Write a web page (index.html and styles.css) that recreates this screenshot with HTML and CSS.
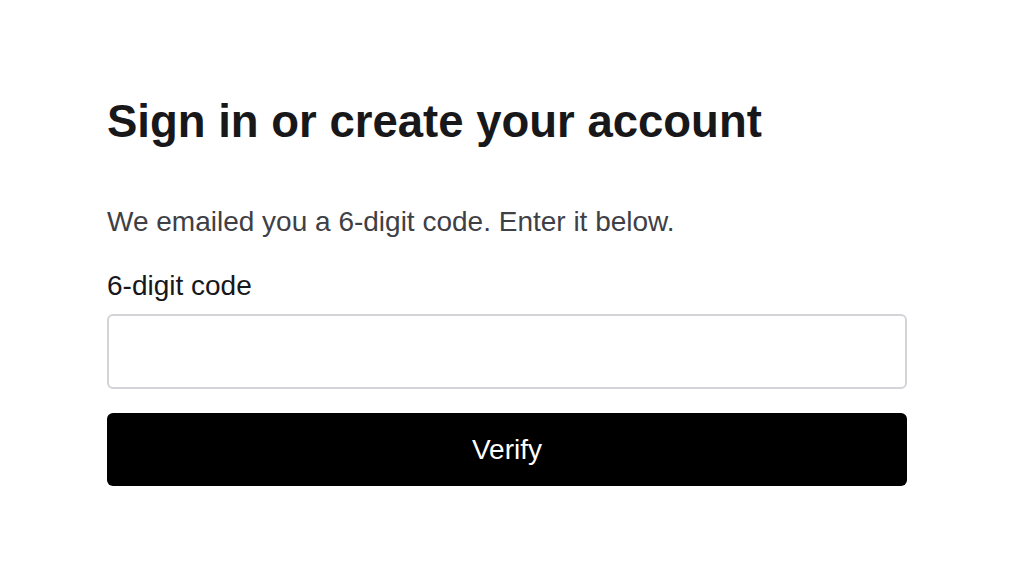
FILE: index.html
```html
<!DOCTYPE html>
<html lang="en">
<head>
<meta charset="utf-8">
<title>Sign in</title>
<link rel="stylesheet" href="styles.css">
</head>
<body>
<main class="page">
  <h1 class="title">Sign in or create your account</h1>
  <p class="lead">We emailed you a 6-digit code. Enter it below.</p>
  <form class="form">
    <label class="label" for="code">6-digit code</label>
    <input class="input" id="code" type="text" inputmode="numeric" autocomplete="one-time-code">
    <button class="button" type="button">Verify</button>
  </form>
</main>
</body>
</html>
```

FILE: styles.css
```css
html, body {
  margin: 0;
  padding: 0;
  background: #ffffff;
}

body {
  font-family: "Liberation Sans", Arial, sans-serif;
  color: #18181b;
}

.page {
  width: 800px;
  padding: 94px 0 0 107px;
  display: flex;
  flex-direction: column;
}

.title {
  margin: 0;
  font-size: 45.5px;
  line-height: 55px;
  font-weight: 700;
  color: #18181b;
}

.lead {
  margin: 52px 0 0;
  font-size: 28px;
  line-height: 42px;
  color: #3f3f46;
}

.form {
  margin-top: 22px;
  display: flex;
  flex-direction: column;
}

.label {
  font-size: 28px;
  line-height: 42px;
  color: #18181b;
}

.input {
  margin-top: 7px;
  box-sizing: border-box;
  width: 800px;
  height: 75px;
  border: 2px solid #d4d4d8;
  border-radius: 6px;
  background: #ffffff;
  padding: 0 20px;
  font: inherit;
  font-size: 28px;
  outline: none;
}

.button {
  margin-top: 24px;
  box-sizing: border-box;
  width: 800px;
  height: 73px;
  border: 0;
  border-radius: 6px;
  background: #000000;
  color: #ffffff;
  font-family: "Liberation Sans", Arial, sans-serif;
  font-size: 28px;
  cursor: pointer;
}
```
